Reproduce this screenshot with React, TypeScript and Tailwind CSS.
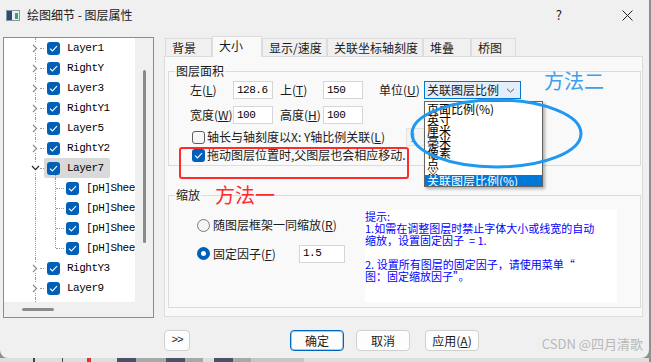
import React from 'react'

type Node = { label: string; child?: boolean; last?: boolean; open?: boolean; selected?: boolean }

const tree: Node[] = [
  { label: 'Layer1' },
  { label: 'RightY' },
  { label: 'Layer3' },
  { label: 'RightY1' },
  { label: 'Layer5' },
  { label: 'RightY2' },
  { label: 'Layer7', open: true, selected: true },
  { label: '[pH]Sheet1', child: true },
  { label: '[pH]Sheet1', child: true },
  { label: '[pH]Sheet1', child: true },
  { label: '[pH]Sheet1', child: true, last: true },
  { label: 'RightY3' },
  { label: 'Layer9' },
]

const tabs = [
  { label: '背景', w: 'w-[47px]' },
  { label: '大小', w: 'w-[50px]', active: true },
  { label: '显示/速度', w: 'w-[65px]' },
  { label: '关联坐标轴刻度', w: 'w-[96px]' },
  { label: '堆叠', w: 'w-[48px]' },
  { label: '桥图', w: 'w-[45px]' },
]

function Check({ on }: { on?: boolean }) {
  if (on) {
    return (
      <span className="flex h-[13px] w-[13px] shrink-0 items-center justify-center rounded-[3px] bg-[#005fb8]">
        <svg width="9" height="7" viewBox="0 0 9 7">
          <path d="M1 3.6l2.4 2.3L8 1.2" stroke="#fff" strokeWidth="1.1" fill="none" />
        </svg>
      </span>
    )
  }
  return <span className="h-[13px] w-[13px] shrink-0 rounded-[3px] border border-[#5e5e5e] bg-[#f6f6f6]" />
}

function Radio({ on }: { on?: boolean }) {
  if (on) {
    return (
      <span className="flex h-[13px] w-[13px] shrink-0 items-center justify-center rounded-full bg-[#005fb8]">
        <span className="h-[5px] w-[5px] rounded-full bg-white" />
      </span>
    )
  }
  return <span className="h-[13px] w-[13px] shrink-0 rounded-full border border-[#7a7a7a] bg-[#f4f4f4]" />
}

function Field({ value, w }: { value: string; w: string }) {
  return (
    <span className={`flex h-[18px] ${w} shrink-0 items-center border border-[#d6d6d6] bg-white pl-[3px] font-['Liberation_Mono',monospace] text-[11px] tracking-[-0.5px] text-black`}>
      {value}
    </span>
  )
}

function TreeRow({ n }: { n: Node }) {
  return (
    <div className="flex h-[20px] items-center">
      <div className="relative h-full w-[40px] shrink-0">
        <div className="absolute bottom-0 left-[31px] top-0 border-l border-dotted border-[#9a9a9a]" />
        {!n.child && (
          <>
            <div className="absolute left-[36px] top-[10px] w-[4px] border-t border-dotted border-[#9a9a9a]" />
            <div className="absolute left-[26px] top-[5px] flex h-[10px] w-[10px] items-center justify-center bg-white">
              {n.open ? (
                <svg width="9" height="6" viewBox="0 0 9 6">
                  <path d="M1 1l3.5 3.6L8 1" stroke="#222" strokeWidth="1.2" fill="none" />
                </svg>
              ) : (
                <svg width="6" height="9" viewBox="0 0 6 9">
                  <path d="M1 1l3.6 3.5L1 8" stroke="#8c8c8c" strokeWidth="1.2" fill="none" />
                </svg>
              )}
            </div>
          </>
        )}
      </div>
      {n.child && (
        <div className="relative h-full w-[20px] shrink-0">
          <div className={`absolute left-[11px] top-0 border-l border-dotted border-[#9a9a9a] ${n.last ? 'h-[10px]' : 'bottom-0'}`} />
          <div className="absolute left-[12px] top-[10px] w-[8px] border-t border-dotted border-[#9a9a9a]" />
        </div>
      )}
      <div className={`relative flex h-full items-center pr-[6px] ${n.child ? 'pl-[2px]' : 'pl-[3px]'} ${n.selected ? 'rounded-[2px] bg-[#d9d9d9]' : ''}`}>
        {n.open && <div className="absolute bottom-0 left-[11px] top-[17px] border-l border-dotted border-[#9a9a9a]" />}
        <Check on />
        <span className="ml-[7px] whitespace-nowrap font-['Liberation_Mono',monospace] text-[11px] tracking-[-0.5px] text-black">
          {n.label}
        </span>
      </div>
    </div>
  )
}

export default function App() {
  return (
    <div className="h-[362px] w-[651px] overflow-hidden bg-[#8f8f8f]">
      <div className="relative flex h-[358px] w-[649px] flex-col rounded-b-[8px] bg-[#f0f0f0] font-['Noto_Sans_CJK_SC',sans-serif] text-[12px] text-[#1a1a1a]">
        {/* title bar */}
        <div className="flex h-[30px] items-center">
          <svg className="ml-[6px]" width="14" height="11" viewBox="0 0 14 11">
            <rect x="0.5" y="0.5" width="13" height="10" fill="#e8eef4" stroke="#8a95a3" />
            <rect x="1" y="1" width="5" height="9" fill="#2b4a7c" />
            <rect x="9" y="3" width="3" height="6" fill="#3aa46a" />
          </svg>
          <span className="ml-[7px] leading-[16px]">绘图细节 - 图层属性</span>
          <span className="ml-auto mr-[60px] text-[13px]">?</span>
          <svg className="mr-[16px]" width="11" height="11" viewBox="0 0 11 11">
            <path d="M0.5 0.5l10 10M10.5 0.5l-10 10" stroke="#222" strokeWidth="1" />
          </svg>
        </div>

        <div className="flex h-[288px]">
          {/* tree */}
          <div className="ml-[3px] mt-[7px] flex h-[281px] w-[151px] flex-col border border-[#8c8c8c]">
            <div className="flex h-[264px]">
              <div className="h-full w-[131px] overflow-hidden bg-white">
                {tree.map((n, i) => (
                  <TreeRow key={i} n={n} />
                ))}
                <div className="relative h-[4px]">
                  <div className="absolute bottom-0 left-[31px] top-0 border-l border-dotted border-[#9a9a9a]" />
                </div>
              </div>
              <div className="flex h-full w-[18px] justify-center bg-[#f0f0f0] pt-[32px]">
                <div className="h-[173px] w-[3px] rounded-full bg-[#8a8a8a]" />
              </div>
            </div>
            <div className="flex h-[15px] items-center bg-[#f0f0f0] pl-[18px]">
              <div className="h-[3px] w-[32px] rounded-full bg-[#8a8a8a]" />
            </div>
          </div>

          {/* tabs */}
          <div className="ml-[10px] mt-[6px] flex w-[479px] flex-col">
            <div className="flex h-[20px] items-end pl-[1px]">
              {tabs.map((t) =>
                t.active ? (
                  <div key={t.label} className={`relative z-10 -mb-px flex h-[21px] ${t.w} items-center border-x border-t border-[#dcdcdc] bg-[#f9f9f9] pl-[6px] pb-[3px]`}>
                    {t.label}
                  </div>
                ) : (
                  <div key={t.label} className={`flex h-[18px] ${t.w} items-center border-x border-t border-[#dcdcdc] bg-[#f0f0f0] pl-[6px]`}>
                    {t.label}
                  </div>
                ),
              )}
            </div>
            <div className="flex h-[261px] flex-col border border-[#dcdcdc] bg-[#f9f9f9]">
              <fieldset className="ml-[3px] mt-[6px] w-[473px] border border-[#dcdcdc] pb-[1px]">
                <legend className="ml-[6px] px-[1px] leading-[16px]">图层面积</legend>
                <div className="mt-[2px] flex h-[18px] items-center pl-[21px]">
                  <span className="w-[43px]">左(<u>L</u>)</span>
                  <Field value="128.6" w="w-[40px]" />
                  <span className="ml-[7px] w-[43px]">上(<u>T</u>)</span>
                  <Field value="150" w="w-[40px]" />
                  <span className="ml-[16px] w-[45px]">单位(<u>U</u>)</span>
                  <span className="flex h-[18px] w-[97px] items-center justify-between border border-[#0078d4] bg-[#e3eefa] pl-[2px] pr-[5px]">
                    关联图层比例
                    <svg width="9" height="5" viewBox="0 0 9 5">
                      <path d="M1 0.8l3.5 3.3L8 0.8" stroke="#555" strokeWidth="1" fill="none" />
                    </svg>
                  </span>
                </div>
                <div className="mt-[7px] flex h-[18px] items-center pl-[21px]">
                  <span className="w-[43px]">宽度(<u>W</u>)</span>
                  <Field value="100" w="w-[40px]" />
                  <span className="ml-[7px] w-[43px]">高度(<u>H</u>)</span>
                  <Field value="100" w="w-[40px]" />
                </div>
                <div className="mt-[4px] flex h-[18px] items-center pl-[23px]">
                  <Check />
                  <span className="ml-[2px] w-[199px] whitespace-nowrap">
                    轴长与轴刻度以X: Y轴比例关联(<u>L</u>)
                  </span>
                  <span className="flex h-[18px] w-[40px] items-center border border-[#e2e2e2] bg-[#f4f4f4] pl-[3px] text-[#9a9a9a]">1</span>
                </div>
                <div className="flex h-[18px] items-center pl-[23px]">
                  <Check on />
                  <span className="ml-[2px] whitespace-nowrap">拖动图层位置时,父图层也会相应移动.</span>
                </div>
              </fieldset>

              <fieldset className="ml-[3px] mt-[21px] h-[121px] w-[473px] border border-[#dcdcdc]">
                <legend className="ml-[6px] px-[1px] leading-[16px]">缩放</legend>
                <div className="flex">
                  <div className="flex w-[196px] flex-col pl-[28px]">
                    <div className="mt-[13px] flex h-[18px] items-center">
                      <Radio />
                      <span className="ml-[3px] whitespace-nowrap">随图层框架一同缩放(<u>R</u>)</span>
                    </div>
                    <div className="mt-[10px] flex h-[19px] items-center">
                      <Radio on />
                      <span className="ml-[3px] w-[86px]">固定因子(<u>F</u>)</span>
                      <Field value="1.5" w="w-[46px]" />
                    </div>
                  </div>
                  <div className="mt-[7px] h-[92px] w-[252px] whitespace-pre bg-white text-[11px] leading-[12px] text-[#0000ff]">
                    {'提示:\n1.如需在调整图层时禁止字体大小或线宽的自动\n缩放，设置固定因子  = 1.\n\n2. 设置所有图层的固定因子，请使用菜单“\n图：固定缩放因子”。'}
                  </div>
                </div>
              </fieldset>
            </div>
          </div>
        </div>

        {/* buttons */}
        <div className="mt-[12px] flex h-[21px] items-center">
          <button className="ml-[164px] flex h-[21px] w-[26px] items-center justify-center rounded-[4px] border border-[#d0d0d0] bg-[#fdfdfd] font-['Liberation_Mono',monospace] text-[11px] tracking-[-1px]">
            &gt;&gt;
          </button>
          <button className="ml-[100px] h-[21px] w-[54px] rounded-[4px] border border-[#0067c0] bg-[#fdfdfd] shadow-[inset_0_0_0_1px_rgba(0,103,192,0.35)]">
            确定
          </button>
          <button className="ml-[12px] h-[21px] w-[54px] rounded-[4px] border border-[#d0d0d0] bg-[#fdfdfd]">取消</button>
          <button className="ml-[15px] h-[21px] w-[54px] rounded-[4px] border border-[#d0d0d0] bg-[#fdfdfd]">
            应用(<u>A</u>)
          </button>
        </div>

        {/* open dropdown list */}
        <div className="absolute left-[424px] top-[101px] h-[86px] w-[119px] overflow-hidden border border-[#646464] bg-white text-[12px] leading-[11px] text-black shadow-[2px_2px_3px_rgba(0,0,0,0.3)]">
          <div className="pl-[2px] pt-px">
            <div className="h-[11px]">页面比例(%)</div>
            <div className="h-[11px]">英寸</div>
            <div className="h-[11px]">厘米</div>
            <div className="h-[11px]">毫米</div>
            <div className="h-[11px]">像素</div>
            <div className="h-[11px]">点</div>
            <div className="h-[6px] overflow-hidden">※</div>
          </div>
          <div className="h-[11px] bg-[#0078d7] pl-[2px] text-white">关联图层比例(%)</div>
        </div>

        {/* annotations */}
        <div className="absolute left-[179px] top-[147px] h-[32px] w-[230px] rounded-[3px] border-2 border-[#ff2b2b]" />
        <span className="absolute left-[215px] top-[183px] text-[20px] leading-[24px] text-[#ff2b2b]">方法一</span>
        <span className="absolute left-[544px] top-[69px] text-[20px] leading-[24px] text-[#3a9ff0]">方法二</span>
        <svg className="absolute left-[410px] top-[97px]" width="175" height="74" viewBox="0 0 175 74">
          <ellipse cx="86.5" cy="36.5" rx="84.5" ry="33.5" fill="none" stroke="#1e98f0" strokeWidth="3" />
        </svg>
        <span className="absolute bottom-[6px] right-[6px] text-[13px] leading-[16px] text-[#b8b8b8]">CSDN @四月清歌</span>
      </div>

      {/* what lies below the window */}
      <div className="flex h-[4px] w-[649px] bg-[#dedede]">
        <div className="ml-[33px] w-[2px] bg-[#444]" />
        <div className="ml-[27px] w-[1px] bg-[#444]" />
        <div className="ml-[24px] w-[4px] bg-[#d33]" />
        <div className="ml-[26px] w-[19px] bg-[#4b5268]" />
        <div className="w-[30px] bg-[#a8a8a8]" />
        <div className="w-[19px] bg-[#4b5268]" />
        <div className="w-[18px] bg-[#a8a8a8]" />
        <div className="ml-[11px] w-[19px] bg-[#4b5268]" />
        <div className="w-[18px] bg-[#a8a8a8]" />
        <div className="w-[53px] bg-[#c6c6c6]" />
      </div>
    </div>
  )
}
